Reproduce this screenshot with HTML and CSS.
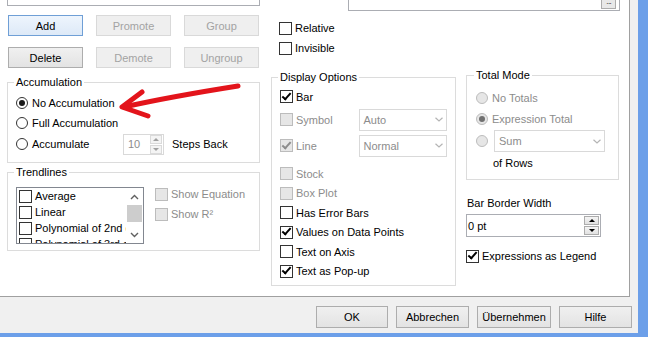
FILE: index.html
```html
<!DOCTYPE html>
<html>
<head>
    <title>Chart Properties</title>
    <link rel="stylesheet" href="styles.css">
</head>
<body>
    <div class="window">
        <div class="panel">
            <div class="left-col">
                <div class="stub"></div>
                <div class="btn-grid">
                    <button class="btn default">Add</button>
                    <button class="btn" disabled>Promote</button>
                    <button class="btn" disabled>Group</button>
                    <button class="btn">Delete</button>
                    <button class="btn" disabled>Demote</button>
                    <button class="btn" disabled>Ungroup</button>
                </div>

                <fieldset class="group accum">
                    <legend>Accumulation</legend>
                    <div class="opt"><span class="radio checked"></span>No Accumulation</div>
                    <div class="opt"><span class="radio"></span>Full Accumulation</div>
                    <div class="opt tall">
                        <span class="acc-label"><span class="radio"></span>Accumulate</span>
                        <span class="spin">
                            <span class="spin-val">10</span>
                            <span class="spin-btns">
                                <span class="sb up dim"></span>
                                <span class="sb down dim"></span>
                            </span>
                        </span>
                        <span class="steps">Steps Back</span>
                    </div>
                </fieldset>

                <fieldset class="group trend">
                    <legend>Trendlines</legend>
                    <div class="tl-row">
                        <div class="listbox">
                            <div class="list-items">
                                <div class="list-item"><span class="check"></span>Average</div>
                                <div class="list-item"><span class="check"></span>Linear</div>
                                <div class="list-item"><span class="check"></span>Polynomial of 2nd degree</div>
                                <div class="list-item"><span class="check"></span>Polynomial of 3rd degree</div>
                            </div>
                            <div class="scrollbar">
                                <span class="sc-btn">
                                    <svg width="9" height="6" viewBox="0 0 9 6"><path d="M1 5 L4.5 1.5 L8 5" fill="none" stroke="#606060" stroke-width="1.4"/></svg>
                                </span>
                                <span class="thumb"></span>
                                <span class="track"></span>
                                <span class="sc-btn">
                                    <svg width="9" height="6" viewBox="0 0 9 6"><path d="M1 1 L4.5 4.5 L8 1" fill="none" stroke="#606060" stroke-width="1.4"/></svg>
                                </span>
                            </div>
                        </div>
                        <div class="show-opts">
                            <div class="opt dis"><span class="check dis"></span>Show Equation</div>
                            <div class="opt dis"><span class="check dis"></span>Show R²</div>
                        </div>
                    </div>
                </fieldset>
            </div>

            <div class="right-part">
                <div class="top-field"><span class="dots">···</span></div>
                <div class="rel-rows">
                    <div class="opt"><span class="check"></span>Relative</div>
                    <div class="opt"><span class="check"></span>Invisible</div>
                </div>

                <div class="cols">
                    <fieldset class="group display">
                        <legend>Display Options</legend>
                        <div class="opt"><span class="check on"></span>Bar</div>
                        <div class="sel-row first">
                            <span class="sel-label dis"><span class="check dis"></span>Symbol</span>
                            <span class="select">Auto
                                <svg width="8" height="5" viewBox="0 0 8 5"><path d="M0.5 0.8 L4 4 L7.5 0.8" fill="none" stroke="#b4b4b4" stroke-width="1.2"/></svg>
                            </span>
                        </div>
                        <div class="sel-row second">
                            <span class="sel-label dis"><span class="check dis on"></span>Line</span>
                            <span class="select">Normal
                                <svg width="8" height="5" viewBox="0 0 8 5"><path d="M0.5 0.8 L4 4 L7.5 0.8" fill="none" stroke="#b4b4b4" stroke-width="1.2"/></svg>
                            </span>
                        </div>
                        <div class="opt short stock dis"><span class="check dis"></span>Stock</div>
                        <div class="opt short dis"><span class="check dis"></span>Box Plot</div>
                        <div class="opt short"><span class="check"></span>Has Error Bars</div>
                        <div class="opt short"><span class="check on"></span>Values on Data Points</div>
                        <div class="opt short"><span class="check"></span>Text on Axis</div>
                        <div class="opt short"><span class="check on"></span>Text as Pop-up</div>
                    </fieldset>

                    <div class="right-col">
                        <fieldset class="group totals">
                            <legend>Total Mode</legend>
                            <div class="opt r21 dis"><span class="radio dis"></span>No Totals</div>
                            <div class="opt r21 dis"><span class="radio dis checked"></span>Expression Total</div>
                            <div class="sum-row">
                                <span class="radio dis"></span>
                                <span class="select wide">Sum
                                    <svg width="8" height="5" viewBox="0 0 8 5"><path d="M0.5 0.8 L4 4 L7.5 0.8" fill="none" stroke="#b4b4b4" stroke-width="1.2"/></svg>
                                </span>
                            </div>
                            <div class="of-rows">of Rows</div>
                        </fieldset>

                        <div class="field-label">Bar Border Width</div>
                        <div class="num">
                            <span>0 pt</span>
                            <span class="spin-btns">
                                <span class="sb up"></span>
                                <span class="sb down"></span>
                            </span>
                        </div>
                        <div class="opt legend-opt"><span class="check on"></span>Expressions as Legend</div>
                    </div>
                </div>
            </div>
        </div>

        <div class="footer">
            <button class="btn fbtn ok">OK</button>
            <button class="btn fbtn abbr">Abbrechen</button>
            <button class="btn fbtn apply">Übernehmen</button>
            <button class="btn fbtn help">Hilfe</button>
        </div>

        <svg class="arrow" width="648" height="337" viewBox="0 0 648 337">
            <path d="M238 86 C200 92 160 99 124 107" fill="none" stroke="#e3141b" stroke-width="5" stroke-linecap="round"/>
            <path d="M142 92 L122 107 L148 116" fill="none" stroke="#e3141b" stroke-width="5" stroke-linecap="round" stroke-linejoin="round"/>
        </svg>
    </div>
</body>
</html>
```

FILE: styles.css
```css
* {
    box-sizing: border-box;
}
body {
    margin: 0;
    font-family: "Liberation Sans", Arial, sans-serif;
    font-size: 11px;
    color: #000;
    background: #fff;
}
.window {
    position: relative;
    width: 648px;
    height: 337px;
    background: #f0f0f0;
    border-right: 10px solid #6c9fe9;
    border-bottom: 4px solid #6c9fe9;
    display: flex;
    flex-direction: column;
}
.panel {
    width: 630px;
    height: 297px;
    flex: none;
    background: #fff;
    border-right: 1px solid #a0a0a0;
    border-bottom: 1px solid #a0a0a0;
    display: flex;
    padding-left: 7px;
}
.left-col {
    width: 253px;
    flex: none;
}
.right-part {
    margin-left: 11px;
    flex: 1;
    display: flex;
    flex-direction: column;
}

/* buttons */
.btn {
    height: 21px;
    padding: 0;
    font: inherit;
    color: #000;
    border: 1px solid #adadad;
    background: linear-gradient(#f0f0f0, #e3e3e3);
}
.btn:disabled {
    color: #a3a3a3;
    border-color: #d9d9d9;
    background: #efefef;
}
.btn.default {
    border-color: #6f9fd6;
    background: linear-gradient(#eef5fd, #dde9f7);
}
.stub {
    height: 6px;
    border: 1px solid #abadb3;
    border-top: none;
}
.btn-grid {
    display: grid;
    grid-template-columns: repeat(3, 75px);
    column-gap: 13px;
    row-gap: 11px;
    margin-top: 9px;
    padding-left: 1px;
}

/* group boxes */
.group {
    margin: 0;
    min-width: 0;
    border: 1px solid #dcdcdc;
}
.group legend {
    padding: 0 2px;
    margin-left: -2px;
    line-height: 13px;
}
.accum {
    margin-top: 8px;
    padding: 4px 8px 7px;
}
.trend {
    margin-top: 3px;
    padding: 8px 8px 6px;
}
.display {
    width: 185px;
    flex: none;
    margin-top: 12.5px;
    padding: 3px 8px 4px;
}
.totals {
    padding: 5.5px 8px 6px 9px;
}

/* rows */
.opt {
    display: flex;
    align-items: center;
    height: 20px;
    white-space: nowrap;
}
.opt.tall {
    height: 22px;
}
.opt.short {
    height: 19.5px;
}
.opt.r21 {
    height: 21px;
}
.opt.stock {
    margin-top: 7.5px;
}
.dis {
    color: #8c8c8c;
}

/* radios and checks */
.radio {
    width: 12px;
    height: 12px;
    flex: none;
    margin-right: 4px;
    border: 1px solid #333;
    border-radius: 50%;
    background: #fff;
    display: flex;
    align-items: center;
    justify-content: center;
}
.radio.checked::after {
    content: "";
    width: 6px;
    height: 6px;
    border-radius: 50%;
    background: #1a1a1a;
}
.radio.dis {
    border-color: #bcbcbc;
    background: #e6e6e6;
}
.radio.dis.checked::after {
    background: #707070;
}
.check {
    width: 13px;
    height: 13px;
    flex: none;
    margin-right: 3px;
    border: 1px solid #333;
    background: #fff;
    display: flex;
    align-items: center;
    justify-content: center;
}
.check.on::after {
    content: "";
    width: 7px;
    height: 3px;
    margin-top: -3px;
    border-left: 2px solid #000;
    border-bottom: 2px solid #000;
    transform: rotate(-48deg);
}
.check.dis {
    border-color: #bcbcbc;
    background: #e6e6e6;
}
.check.dis.on::after {
    border-color: #8c8c8c;
}

/* accumulate spinner */
.acc-label {
    width: 107px;
    display: flex;
    align-items: center;
}
.spin {
    width: 41px;
    height: 21px;
    border: 1px solid #d9d9d9;
    display: flex;
    align-items: center;
    justify-content: space-between;
    padding: 0 1px 0 4px;
    color: #8c8c8c;
}
.steps {
    margin-left: 8px;
}
.spin-btns {
    display: flex;
    flex-direction: column;
    gap: 1px;
}
.sb {
    width: 13px;
    height: 9px;
    border: 1px solid #acacac;
    background: linear-gradient(#f4f4f4, #e2e2e2);
    display: flex;
    align-items: center;
    justify-content: center;
}
.sb.dim {
    width: 12px;
    border-color: #dadada;
    background: #f4f4f4;
}
.sb.up::after,
.sb.down::after {
    content: "";
    border-left: 3px solid transparent;
    border-right: 3px solid transparent;
}
.sb.up::after {
    border-bottom: 3px solid #000;
}
.sb.down::after {
    border-top: 3px solid #000;
}
.sb.dim.up::after {
    border-bottom-color: #a0a0a0;
}
.sb.dim.down::after {
    border-top-color: #a0a0a0;
}

/* trendlines */
.tl-row {
    display: flex;
    align-items: flex-start;
}
.listbox {
    width: 128px;
    height: 57px;
    flex: none;
    border: 1px solid #828790;
    display: flex;
    overflow: hidden;
}
.list-items {
    flex: 1;
    min-width: 0;
    padding-left: 2px;
    overflow: hidden;
}
.list-item {
    height: 16px;
    display: flex;
    align-items: center;
    white-space: nowrap;
}
.scrollbar {
    width: 17px;
    flex: none;
    display: flex;
    flex-direction: column;
}
.sc-btn {
    height: 17px;
    display: flex;
    align-items: center;
    justify-content: center;
}
.thumb {
    height: 17px;
    margin: 0 1px;
    background: #cdcdcd;
}
.track {
    flex: 1;
}
.show-opts {
    margin-left: 11px;
    margin-top: -3px;
}

/* right part */
.top-field {
    margin-left: 77px;
    width: 272px;
    height: 11px;
    border: 1px solid #abadb3;
    border-top: none;
    display: flex;
    justify-content: flex-end;
    align-items: flex-start;
    padding-right: 3px;
}
.dots {
    width: 15px;
    height: 9px;
    border: 1px solid #acacac;
    border-top: none;
    background: #e8e8e8;
    font-size: 8px;
    line-height: 8px;
    text-align: center;
    letter-spacing: -1px;
}
.rel-rows {
    margin-top: 7px;
    padding-left: 8px;
}
.cols {
    display: flex;
    align-items: flex-start;
    gap: 10px;
}
.right-col {
    width: 153px;
    flex: none;
    margin-top: 10.5px;
}

/* dropdowns */
.sel-row {
    display: flex;
    align-items: center;
    height: 22px;
}
.sel-row.first {
    margin-top: 2px;
}
.sel-row.second {
    margin-top: 4px;
}
.sel-label {
    width: 80px;
    display: flex;
    align-items: center;
}
.select {
    width: 90px;
    height: 22px;
    border: 1px solid #d9d9d9;
    display: flex;
    align-items: center;
    justify-content: space-between;
    padding: 0 3px 0 4px;
    color: #8c8c8c;
}
.select.wide {
    width: 111px;
}
.sum-row {
    display: flex;
    align-items: center;
    height: 22px;
    margin-top: 1px;
}
.sum-row .radio {
    margin-right: 6px;
}
.of-rows {
    height: 20px;
    line-height: 20px;
    margin-top: 1px;
    padding-left: 17px;
}

/* bar border width */
.field-label {
    margin-top: 17px;
    padding-left: 1px;
    line-height: 13px;
}
.num {
    width: 135px;
    height: 23px;
    margin-top: 4px;
    border: 1px solid #abadb3;
    display: flex;
    align-items: center;
    justify-content: space-between;
    padding: 0 1px 0 1px;
}
.num .sb {
    width: 15px;
}
.legend-opt {
    margin-top: 9px;
}

/* footer */
.footer {
    flex: 1;
    display: flex;
    justify-content: flex-end;
    align-items: flex-start;
    gap: 8px;
    padding: 9px 6px 0 0;
}
.fbtn {
    height: 22px;
}
.ok {
    width: 72px;
}
.abbr {
    width: 73px;
}
.apply {
    width: 74px;
}
.help {
    width: 73px;
}

.arrow {
    position: absolute;
    left: 0;
    top: 0;
    pointer-events: none;
}
```
